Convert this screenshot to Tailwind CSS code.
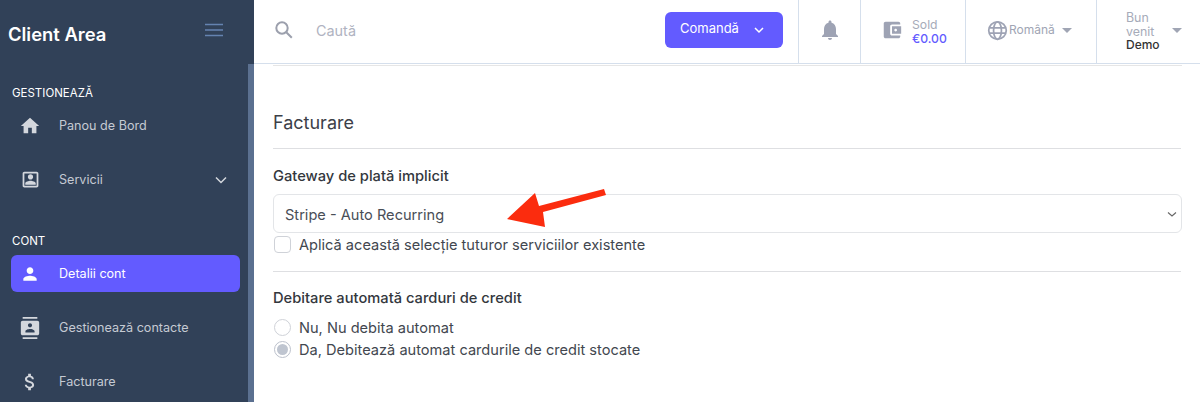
<!DOCTYPE html>
<html>
<head>
<meta charset="utf-8">
<script src="https://cdn.jsdelivr.net/npm/@tailwindcss/browser@4"></script>
</head>
<body class="h-[402px] w-[1200px] overflow-hidden bg-white font-['Inter',sans-serif]">
<div class="flex h-[402px]">
  <aside class="flex h-full w-[254px] shrink-0 flex-col bg-[#314158] relative">
    <div class="flex h-[64px] shrink-0 items-center justify-between pl-[8px] pr-[31px]">
      <span class="text-[18.4px] leading-[24px] font-semibold text-white mt-[3px]">Client Area</span>
      <svg width="18" height="14" viewBox="0 0 18 14" class="mt-[-4px]" fill="none" stroke="#6583b0" stroke-width="1.5"><path d="M0 1.5h18M0 7h18M0 12.5h18"/></svg>
    </div>
    <div class="absolute right-0 top-[64px] bottom-0 w-[6px] bg-[#5b7090]"></div>
    <nav class="flex flex-col pl-[11px] pr-[14px]">
      <div class="pl-[1px] mt-[21px] text-[11.5px] leading-[16px] text-white">GESTIONEAZĂ</div>
      <a class="mt-[6px] flex h-[37px] items-center text-[12.6px] text-[#c5cad3]">
        <span class="flex w-[48px] justify-center pl-[1px] pr-[11px]">
          <svg width="22" height="22" viewBox="0 0 24 24" fill="#d4d7dd"><path d="M10 20v-6h4v6h5v-8h3L12 3 2 12h3v8z"/></svg>
        </span><span class="mt-[2px]">Panou de Bord</span></a>
      <a class="mt-[17px] flex h-[37px] items-center text-[12.6px] text-[#c5cad3]">
        <span class="flex w-[48px] justify-center pl-[1px] pr-[11px]">
          <svg width="21" height="21" viewBox="0 0 24 24" fill="#d4d7dd"><path d="M19 5v14H5V5h14m0-2H5c-1.1 0-2 .9-2 2v14c0 1.1.9 2 2 2h14c1.1 0 2-.9 2-2V5c0-1.100-.9-2-2-2zM12 12c1.650 0 3-1.350 3-3s-1.350-3-3-3-3 1.350-3 3 1.350 3 3 3zm6 6H6v-1.500c0-2 4-3.100 6-3.100s6 1.100 6 3.100V18z"/></svg>
        </span><span class="mt-[2px]">Servicii</span>
        <svg class="ml-auto mr-[11px]" width="16" height="16" viewBox="0 0 16 16" fill="none" stroke="#d4d7dd" stroke-width="1.500"><path d="M3 5.500l5 5 5-5"/></svg>
      </a>
      <div class="pl-[1px] mt-[35px] text-[11.5px] leading-[16px] text-white">CONT</div>
      <a class="mt-[6px] flex h-[37px] items-center rounded-[6px] bg-[#635bff] text-[12.6px] text-white">
        <span class="flex w-[48px] justify-center pl-[1px] pr-[11px]">
          <svg width="20" height="20" viewBox="0 0 24 24" fill="#fff"><path d="M12 12c2.210 0 4-1.790 4-4s-1.790-4-4-4-4 1.790-4 4 1.790 4 4 4zm0 2c-2.670 0-8 1.340-8 4v2h16v-2c0-2.660-5.330-4-8-4z"/></svg>
        </span><span class="mt-[2px]">Detalii cont</span></a>
      <a class="mt-[17px] flex h-[37px] items-center text-[12.6px] text-[#c5cad3]">
        <span class="flex w-[48px] justify-center pl-[1px] pr-[11px]">
          <svg width="22" height="24" viewBox="0 0 24 24" fill="#d4d7dd"><path d="M20 0H4v2h16V0zM4 24h16v-2H4v2zM20 4H4c-1.100 0-2 .9-2 2v12c0 1.100.9 2 2 2h16c1.100 0 2-.9 2-2V6c0-1.100-.9-2-2-2zm-8 2.750c1.240 0 2.250 1.010 2.250 2.250s-1.010 2.250-2.250 2.250S9.750 10.240 9.750 9 10.760 6.750 12 6.750zM17 17H7v-1.500c0-1.670 3.330-2.500 5-2.500s5 .83 5 2.500V17z"/></svg>
        </span><span class="mt-[2px]">Gestionează contacte</span></a>
      <a class="mt-[17px] flex h-[37px] items-center text-[12.6px] text-[#c5cad3]">
        <span class="flex w-[48px] justify-center pl-[1px] pr-[11px]">
          <svg width="22" height="24" viewBox="0 0 24 24" fill="#d4d7dd"><path d="M11.800 10.900c-2.270-.59-3-1.200-3-2.150 0-1.090 1.010-1.850 2.700-1.850 1.780 0 2.440.85 2.500 2.100h2.210c-.07-1.720-1.120-3.300-3.210-3.810V3h-3v2.160c-1.940.42-3.500 1.680-3.500 3.610 0 2.310 1.910 3.460 4.700 4.130 2.500.6 3 1.480 3 2.410 0 .69-.49 1.790-2.700 1.790-2.060 0-2.870-.92-2.980-2.100h-2.200c.12 2.190 1.760 3.420 3.680 3.830V21h3v-2.150c1.950-.37 3.500-1.500 3.500-3.550 0-2.840-2.430-3.810-4.700-4.400z"/></svg>
        </span><span class="mt-[2px]">Facturare</span></a>
    </nav>
  </aside>
  <main class="flex min-w-0 flex-1 flex-col">
    <header class="flex h-[64px] shrink-0 items-stretch border-b border-[#d5dfec] bg-white">
      <div class="flex flex-1 items-center">
        <svg class="ml-[20px] mt-[-3px]" width="20" height="20" viewBox="0 0 20 20" fill="none" stroke="#9ca0ad" stroke-width="2"><circle cx="8" cy="8" r="5.700"/><path d="M12.300 12.300l5.500 5.500"/></svg>
        <span class="ml-[22px] text-[14.4px] text-[#b0b3c1] mt-[-2px]">Caută</span>
        <button class="ml-auto mr-[15px] flex h-[36px] w-[118px] items-center rounded-[6px] bg-[#635bff] pl-[15px] text-[13px] text-white mt-[-4px]"><span class="mt-[-2px]">Comandă</span>
          <svg class="ml-[14px]" width="12" height="12" viewBox="0 0 12 12" fill="none" stroke="#fff" stroke-width="1.500"><path d="M2 4l4 4 4-4"/></svg>
        </button>
      </div>
      <div class="flex w-[62px] items-center justify-center border-l border-[#d5dfec]">
        <svg class="mt-[-3px]" width="24" height="24" viewBox="0 0 24 24" fill="#9ea3b4"><path d="M12 22c1.100 0 2-.9 2-2h-4c0 1.100.9 2 2 2zm6-6v-5c0-3.070-1.630-5.640-4.500-6.320V4c0-.83-.67-1.500-1.500-1.500s-1.500.67-1.500 1.500v.68C7.640 5.360 6 7.920 6 11v5l-2 2v1h16v-1l-2-2z"/></svg>
      </div>
      <div class="flex w-[105px] items-center border-l border-[#d5dfec] pl-[20px]">
        <svg class="mt-[-3px]" width="22" height="22" viewBox="0 0 24 24" fill="#9ea3b4"><path d="M21 18v1c0 1.100-.9 2-2 2H5c-1.110 0-2-.9-2-2V5c0-1.100.89-2 2-2h14c1.100 0 2 .9 2 2v1h-9c-1.110 0-2 .9-2 2v8c0 1.100.89 2 2 2h9zm-9-2h10V8H12v8zm4-2.500c-.83 0-1.500-.67-1.500-1.500s.67-1.500 1.500-1.500 1.500.67 1.500 1.500-.67 1.500-1.500 1.500z"/></svg>
        <div class="ml-[9px] flex flex-col text-[12.2px] leading-[14px]">
          <span class="text-[#a6abb9]">Sold</span>
          <span class="font-medium text-[#635bff]">€0.00</span>
        </div>
      </div>
      <div class="flex w-[131px] items-center border-l border-[#d5dfec] pl-[21px]">
        <svg class="mt-[-2px]" width="21" height="21" viewBox="0 0 24 24" fill="none" stroke="#9ea3b4" stroke-width="2"><circle cx="12" cy="12" r="10"/><ellipse cx="12" cy="12" rx="4.500" ry="10"/><path d="M2.500 9h19M2.500 15h19"/></svg>
        <span class="ml-[1px] mt-[-4px] text-[12px] text-[#a0a5b4]">Română</span>
        <span class="ml-[7px] mt-[-2px] h-0 w-0 border-x-[5px] border-t-[5px] border-x-transparent border-t-[#a0a5b4]"></span>
      </div>
      <div class="flex w-[104px] items-start border-l border-[#d5dfec] pl-[29px] pt-[11px]">
        <div class="flex w-[40px] flex-col text-[12.4px] leading-[13.500px]">
          <span class="w-[36px] text-[#a6abb9]">Bun venit</span>
          <span class="text-[12px] font-medium text-[#333]">Demo</span>
        </div>
        <span class="ml-[6px] mt-[17px] h-0 w-0 border-x-[5px] border-t-[5px] border-x-transparent border-t-[#a0a5b4]"></span>
      </div>
    </header>
    <div class="flex-1 px-[19px]">
      <div class="h-[2px] border-b border-[#e6e6e6] mr-[-1px]"></div>
      <h2 class="mt-[44px] text-[18px] leading-[26px] text-[#3c4048]">Facturare</h2>
      <div class="mt-[12px] border-t border-[#dedfe2]"></div>
      <label class="mt-[17px] block text-[14.7px] leading-[20px] font-medium text-[#33373d]">Gateway de plată implicit</label>
      <div class="mt-[8px] flex h-[39px] items-center justify-between rounded-[6px] border border-[#e3e5e8] pl-[11px] pr-[3px] text-[14.6px] text-[#494e57] mr-[-1px]">
        <span class="mt-[4px]">Stripe - Auto Recurring</span>
        <svg width="12" height="12" viewBox="0 0 12 12" fill="none" stroke="#666" stroke-width="1.100"><path d="M2 4.500l4 3.500 4-3.500"/></svg>
      </div>
      <div class="flex h-[22px] items-center text-[14.6px] text-[#42474f]">
        <span class="ml-[1px] h-[17px] w-[17px] rounded-[4px] border border-[#cfd2d8]"></span>
        <span class="ml-[8px] mt-[3px]">Aplică această selecție tuturor serviciilor existente</span>
      </div>
      <div class="mt-[16px] border-t border-[#dedfe2]"></div>
      <div class="mt-[16px] text-[14.7px] leading-[20px] font-medium text-[#33373d]">Debitare automată carduri de credit</div>
      <div class="mt-[9px] flex h-[21px] items-center text-[14.6px] text-[#42474f]">
        <span class="ml-[1px] h-[17px] w-[17px] rounded-full border border-[#cfd2d8]"></span>
        <span class="ml-[8px] mt-[2px]">Nu, Nu debita automat</span>
      </div>
      <div class="flex h-[23px] items-center text-[14.6px] text-[#42474f]">
        <span class="ml-[1px] flex h-[17px] w-[17px] items-center justify-center rounded-full border border-[#bcc1cc]"><span class="h-[11px] w-[11px] rounded-full bg-[#bfc5d0]"></span></span>
        <span class="ml-[8px] mt-[2px]">Da, Debitează automat cardurile de credit stocate</span>
      </div>
    </div>
  </main>
</div>
<svg class="absolute left-[505px] top-[186px]" width="102" height="44" viewBox="0 0 102 44" fill="#fb2c0e"><path d="M2 33L30 7l4 13L99 3l2 6-63 17 2 15z"/></svg>
</body>
</html>
